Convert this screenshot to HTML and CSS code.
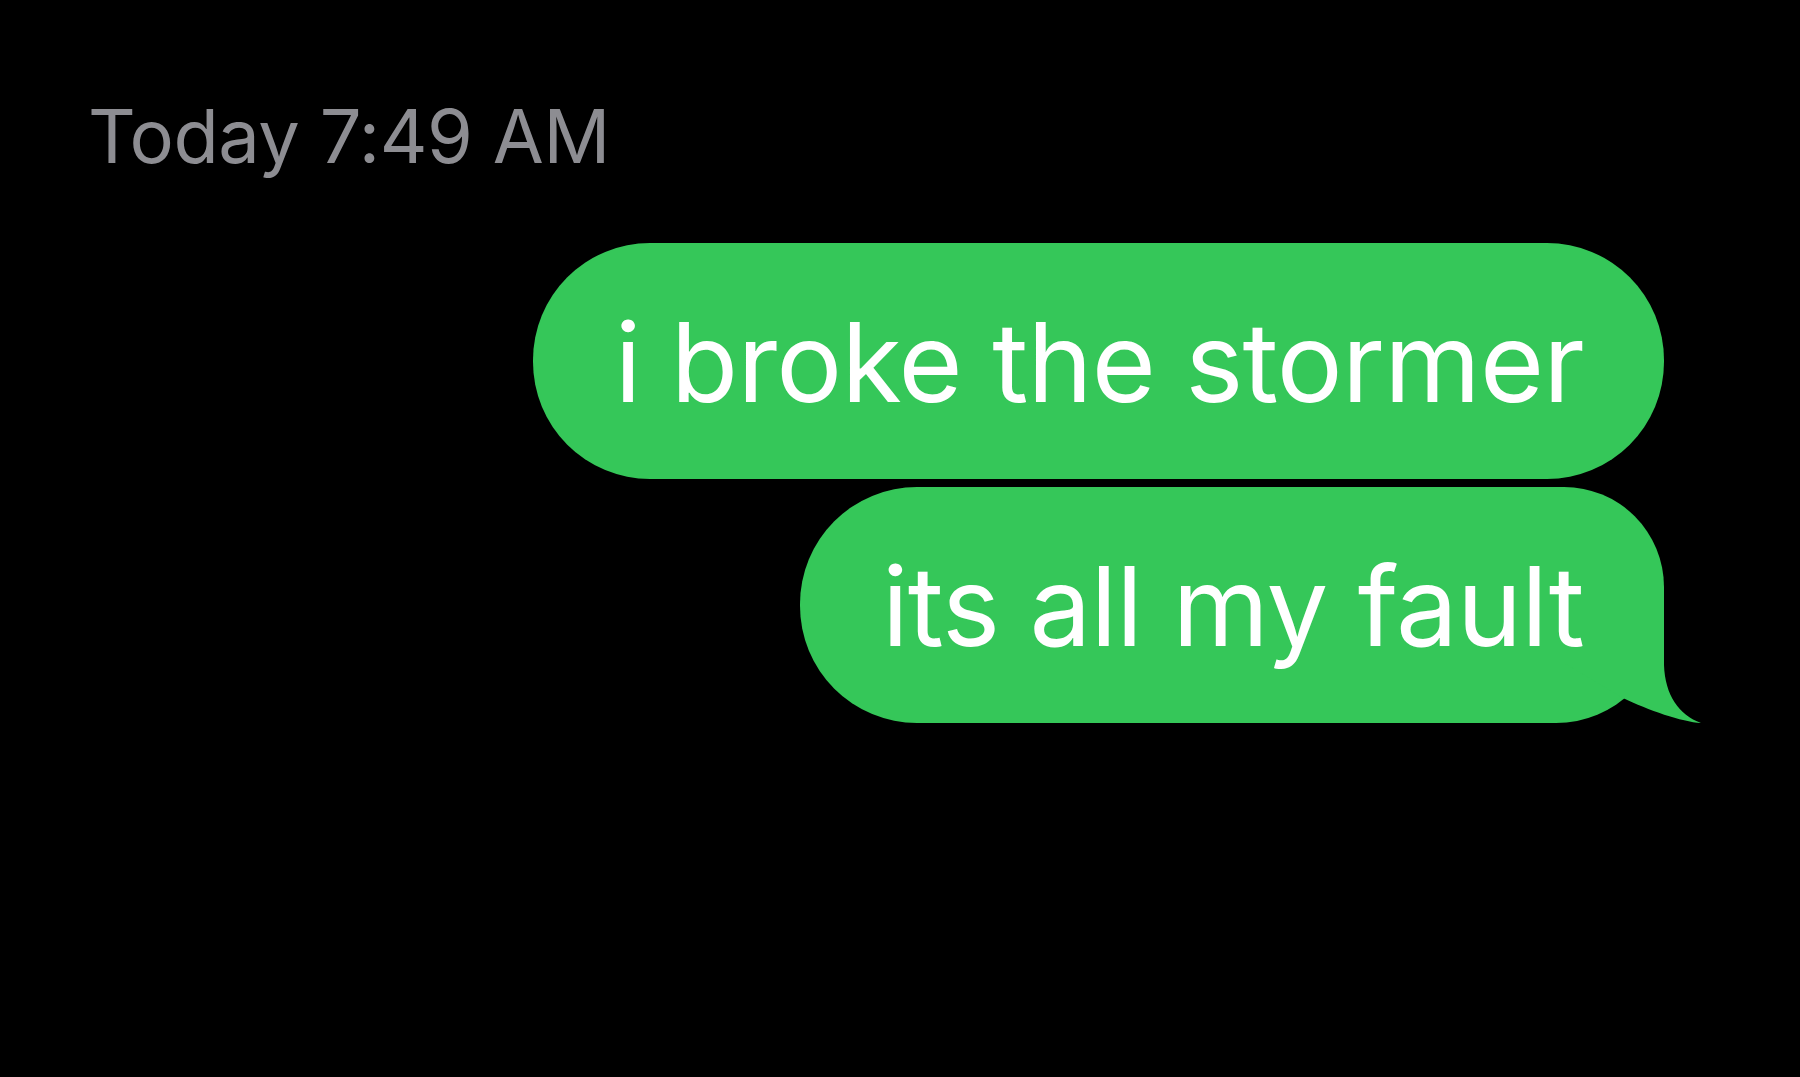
FILE: index.html
```html
<!DOCTYPE html>
<html lang="en">
<head>
<meta charset="UTF-8">
<meta name="viewport" content="width=device-width, initial-scale=1.0">
<title>Messages</title>
<link rel="stylesheet" href="styles.css">
</head>
<body>
  <div id="thread">
    <div class="stamp">Today 7:49 AM</div>
    <div class="messages">
      <div class="bubble"><span class="msg">i broke the stormer</span></div>
      <div class="bubble bubble-last">
        <svg class="tail" viewBox="0 0 140 120" width="140" height="120" aria-hidden="true">
          <path d="M100 0 L100 62 C101 92 115 112 137 120 C118 119 84 107 59 95 L0 60 L0 0 Z" fill="#35c759"/>
        </svg>
        <span class="msg">its all my fault</span>
      </div>
    </div>
  </div>
</body>
</html>
```

FILE: styles.css
```css
body {
  margin: 0;
  padding: 0;
  background-color: #000000;
  font-family: Inter, "Noto Sans", sans-serif;
}
#thread {
  padding: 91px 136px 0 88px;
}
.stamp {
  font-size: 74px;
  line-height: 90px;
  letter-spacing: -0.45px;
  color: #8d8d92;
}
.messages {
  display: flex;
  flex-direction: column;
  align-items: flex-end;
  gap: 8px;
  margin-top: 62px;
}
.bubble {
  position: relative;
  background-color: #35c759;
  color: #ffffff;
  font-size: 110px;
  line-height: 133px;
  letter-spacing: -0.75px;
  padding: 53px 80px 50px 82px;
  border-radius: 117px;
  white-space: nowrap;
}
.bubble-last {
  border-radius: 117px 100px 108px 117px;
}
.msg {
  position: relative;
}
.tail {
  position: absolute;
  right: -40px;
  bottom: 0;
}
```
